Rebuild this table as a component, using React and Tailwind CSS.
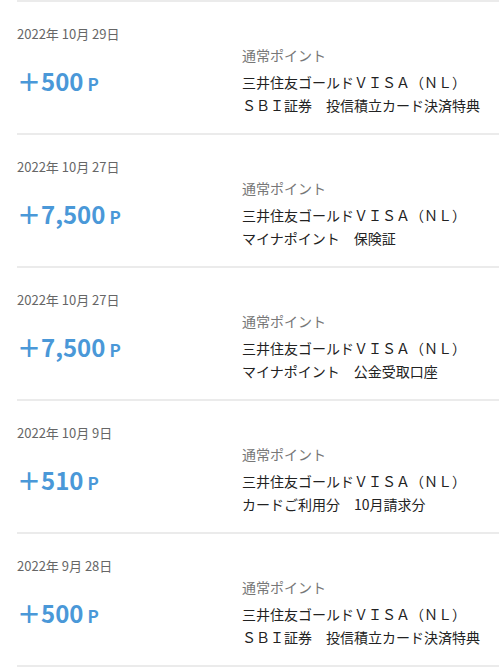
import React from 'react';

const history = [
  { date: '2022年 10月 29日', amount: '500', source: '三井住友ゴールドＶＩＳＡ（ＮＬ）', note: 'ＳＢＩ証券　投信積立カード決済特典' },
  { date: '2022年 10月 27日', amount: '7,500', source: '三井住友ゴールドＶＩＳＡ（ＮＬ）', note: 'マイナポイント　保険証' },
  { date: '2022年 10月 27日', amount: '7,500', source: '三井住友ゴールドＶＩＳＡ（ＮＬ）', note: 'マイナポイント　公金受取口座' },
  { date: '2022年 10月 9日', amount: '510', source: '三井住友ゴールドＶＩＳＡ（ＮＬ）', note: 'カードご利用分　10月請求分' },
  { date: '2022年 9月 28日', amount: '500', source: '三井住友ゴールドＶＩＳＡ（ＮＬ）', note: 'ＳＢＩ証券　投信積立カード決済特典' },
];

const Row = ({ item }) => (
  <li className="border-b-2 border-[#ebebeb] pt-[22px] pb-[16px]">
    <p className="text-[13px] leading-[20px] text-[#666]">{item.date}</p>
    <div className="mt-[1px] flex items-center">
      <div className="w-[225px] shrink-0 pt-[4px] font-bold text-[#4a98d8]">
        <span className="text-[24px] leading-none">＋{item.amount}</span>
        <span className="ml-[4px] text-[17px]">P</span>
      </div>
      <div className="min-w-0">
        <p className="text-[14px] leading-[20px] text-[#777]">通常ポイント</p>
        <div className="mt-[6px] text-[14px] leading-[23px] text-[#222] whitespace-nowrap">
          <p>{item.source}</p>
          <p>{item.note}</p>
        </div>
      </div>
    </div>
  </li>
);

export default function App() {
  return (
    <div className="min-h-screen bg-white pl-[17px] font-['Noto_Sans_CJK_JP','Noto_Sans',sans-serif]">
      <ul className="border-t-2 border-[#ebebeb]">
        {history.map((item, i) => (
          <Row key={i} item={item} />
        ))}
      </ul>
    </div>
  );
}
